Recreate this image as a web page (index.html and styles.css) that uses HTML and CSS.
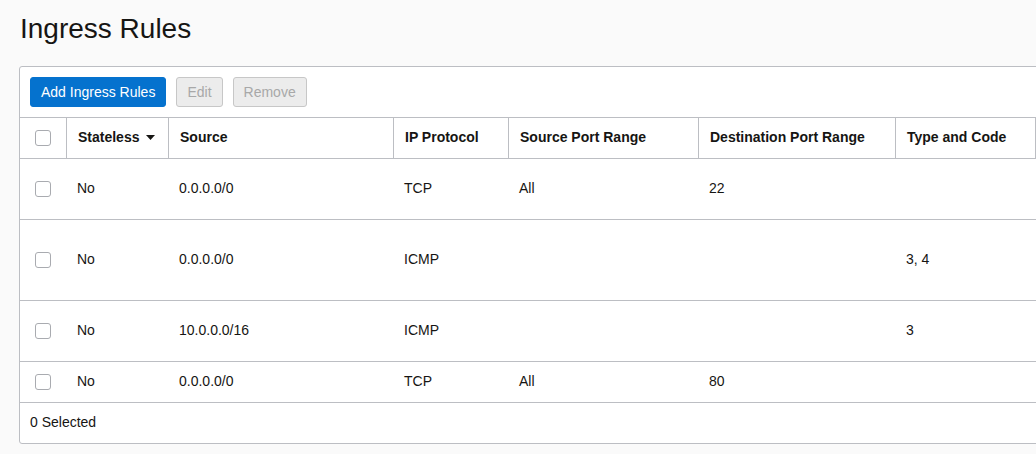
FILE: index.html
```html
<!DOCTYPE html>
<html lang="en">
<head>
<meta charset="utf-8">
<title>Ingress Rules</title>
<link rel="stylesheet" href="styles.css">
</head>
<body>
<main class="page">
  <h1 class="title">Ingress Rules</h1>
  <section class="panel">
    <div class="toolbar">
      <button class="btn btn-primary" type="button">Add Ingress Rules</button>
      <button class="btn btn-disabled" type="button" disabled>Edit</button>
      <button class="btn btn-disabled" type="button" disabled>Remove</button>
    </div>
    <div class="grid">
      <div class="row head">
        <div class="cell chk"><span class="box"></span></div>
        <div class="cell">Stateless <svg class="sort" width="9" height="5" viewBox="0 0 9 5"><path d="M0 0H9L4.5 5Z" fill="#161513"/></svg></div>
        <div class="cell">Source</div>
        <div class="cell">IP Protocol</div>
        <div class="cell">Source Port Range</div>
        <div class="cell">Destination Port Range</div>
        <div class="cell">Type and Code</div>
        <div class="cell"></div>
      </div>
      <div class="row h60">
        <div class="cell chk"><span class="box"></span></div>
        <div class="cell">No</div>
        <div class="cell">0.0.0.0/0</div>
        <div class="cell">TCP</div>
        <div class="cell">All</div>
        <div class="cell">22</div>
        <div class="cell"></div>
        <div class="cell"></div>
      </div>
      <div class="row h80">
        <div class="cell chk"><span class="box"></span></div>
        <div class="cell">No</div>
        <div class="cell">0.0.0.0/0</div>
        <div class="cell">ICMP</div>
        <div class="cell"></div>
        <div class="cell"></div>
        <div class="cell">3, 4</div>
        <div class="cell"></div>
      </div>
      <div class="row h60">
        <div class="cell chk"><span class="box"></span></div>
        <div class="cell">No</div>
        <div class="cell">10.0.0.0/16</div>
        <div class="cell">ICMP</div>
        <div class="cell"></div>
        <div class="cell"></div>
        <div class="cell">3</div>
        <div class="cell"></div>
      </div>
      <div class="row h40">
        <div class="cell chk"><span class="box"></span></div>
        <div class="cell">No</div>
        <div class="cell">0.0.0.0/0</div>
        <div class="cell">TCP</div>
        <div class="cell">All</div>
        <div class="cell">80</div>
        <div class="cell"></div>
        <div class="cell"></div>
      </div>
    </div>
    <div class="footer">0 Selected</div>
  </section>
</main>
</body>
</html>
```
FILE: styles.css
```css
html, body {
  margin: 0;
  padding: 0;
  overflow: hidden;
  background: #fafafa;
}
body {
  font-family: "Liberation Sans", Arial, sans-serif;
  color: #161513;
  font-size: 14px;
}
.page {
  padding: 13px 0 0 19px;
  width: 1300px;
}
.title {
  margin: 0 0 21px 1px;
  font-size: 28px;
  font-weight: normal;
  line-height: 32px;
  color: #161513;
}
.panel {
  background: #fff;
  border: 1px solid #bcbec3;
  border-radius: 3px;
  width: 1240px;
}
.toolbar {
  display: flex;
  gap: 10px;
  padding: 10px;
  border-bottom: 1px solid #bcbec3;
}
.btn {
  height: 30px;
  padding: 0 10px;
  border-radius: 3px;
  font-family: inherit;
  font-size: 14px;
  border: 1px solid transparent;
  line-height: 28px;
}
.btn-primary {
  background: #0572ce;
  border-color: #0572ce;
  color: #fff;
}
.btn-disabled {
  background: #ececec;
  border-color: #c7c7c7;
  color: #a8a8a8;
}
.row {
  display: grid;
  grid-template-columns: 46px 102px 225px 115px 190px 197px 140px 220px;
  border-bottom: 1px solid #bcbec3;
  align-items: stretch;
}
.row.head {
  height: 40px;
  font-weight: bold;
}
.row.head .cell + .cell {
  border-left: 1px solid #bcbec3;
}
.row.h60 { height: 60px; }
.row.h80 { height: 80px; }
.row.h40 { height: 40px; }
.cell {
  display: flex;
  align-items: center;
  padding: 0 0 2px 11px;
  white-space: nowrap;
}
.cell.chk {
  padding: 0;
  justify-content: center;
}
.sort {
  margin-left: 7px;
  margin-top: 1px;
}
.box {
  display: block;
  width: 14px;
  height: 14px;
  border: 1px solid #a9abb0;
  border-radius: 3px;
  background: #fff;
}
.footer {
  height: 40px;
  display: flex;
  align-items: center;
  padding: 0 0 2px 10px;
  box-sizing: border-box;
}
```
